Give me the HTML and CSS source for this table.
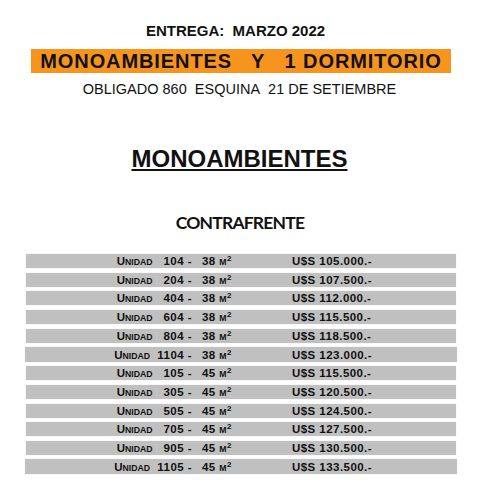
FILE: index.html
```html
<!DOCTYPE html>
<html lang="es">
<head>
<meta charset="utf-8">
<title>Entrega Marzo 2022</title>
<link rel="stylesheet" href="styles.css">
</head>
<body>
<div class="page">
  <div class="entrega">ENTREGA:&nbsp; MARZO 2022</div>
  <div class="banner">MONOAMBIENTES&nbsp;&nbsp; Y&nbsp;&nbsp; 1 DORMITORIO</div>
  <div class="address">OBLIGADO 860&nbsp; ESQUINA&nbsp; 21 DE SETIEMBRE</div>
  <h1 class="title">MONOAMBIENTES</h1>
  <h2 class="subtitle">CONTRAFRENTE</h2>
  <div class="rows">
    <div class="row"><span class="unit"><span class="lbl">U<span class="sm">nidad</span></span>&nbsp;&nbsp;&nbsp;104 -</span><span class="area">38 <span class="sm">m</span><sup>2</sup></span><span class="price">U$S 105.000.-</span></div>
    <div class="row"><span class="unit"><span class="lbl">U<span class="sm">nidad</span></span>&nbsp;&nbsp;&nbsp;204 -</span><span class="area">38 <span class="sm">m</span><sup>2</sup></span><span class="price">U$S 107.500.-</span></div>
    <div class="row"><span class="unit"><span class="lbl">U<span class="sm">nidad</span></span>&nbsp;&nbsp;&nbsp;404 -</span><span class="area">38 <span class="sm">m</span><sup>2</sup></span><span class="price">U$S 112.000.-</span></div>
    <div class="row"><span class="unit"><span class="lbl">U<span class="sm">nidad</span></span>&nbsp;&nbsp;&nbsp;604 -</span><span class="area">38 <span class="sm">m</span><sup>2</sup></span><span class="price">U$S 115.500.-</span></div>
    <div class="row"><span class="unit"><span class="lbl">U<span class="sm">nidad</span></span>&nbsp;&nbsp;&nbsp;804 -</span><span class="area">38 <span class="sm">m</span><sup>2</sup></span><span class="price">U$S 118.500.-</span></div>
    <div class="row wide"><span class="unit"><span class="lbl">U<span class="sm">nidad</span></span>&nbsp; 1104 -</span><span class="area">38 <span class="sm">m</span><sup>2</sup></span><span class="price">U$S 123.000.-</span></div>
    <div class="row"><span class="unit"><span class="lbl">U<span class="sm">nidad</span></span>&nbsp;&nbsp;&nbsp;105 -</span><span class="area">45 <span class="sm">m</span><sup>2</sup></span><span class="price">U$S 115.500.-</span></div>
    <div class="row"><span class="unit"><span class="lbl">U<span class="sm">nidad</span></span>&nbsp;&nbsp;&nbsp;305 -</span><span class="area">45 <span class="sm">m</span><sup>2</sup></span><span class="price">U$S 120.500.-</span></div>
    <div class="row"><span class="unit"><span class="lbl">U<span class="sm">nidad</span></span>&nbsp;&nbsp;&nbsp;505 -</span><span class="area">45 <span class="sm">m</span><sup>2</sup></span><span class="price">U$S 124.500.-</span></div>
    <div class="row"><span class="unit"><span class="lbl">U<span class="sm">nidad</span></span>&nbsp;&nbsp;&nbsp;705 -</span><span class="area">45 <span class="sm">m</span><sup>2</sup></span><span class="price">U$S 127.500.-</span></div>
    <div class="row"><span class="unit"><span class="lbl">U<span class="sm">nidad</span></span>&nbsp;&nbsp;&nbsp;905 -</span><span class="area">45 <span class="sm">m</span><sup>2</sup></span><span class="price">U$S 130.500.-</span></div>
    <div class="row wide"><span class="unit"><span class="lbl">U<span class="sm">nidad</span></span>&nbsp; 1105 -</span><span class="area">45 <span class="sm">m</span><sup>2</sup></span><span class="price">U$S 133.500.-</span></div>
  </div>
</div>
</body>
</html>
```
FILE: styles.css
```css
html, body {
  margin: 0;
  padding: 0;
  background: #ffffff;
}
.page {
  width: 479px;
  height: 500px;
  padding-top: 22px;
  box-sizing: border-box;
  font-family: "Liberation Sans", Arial, sans-serif;
  color: #111;
  display: flex;
  flex-direction: column;
  align-items: center;
}
.entrega {
  font-size: 15px;
  font-weight: bold;
  line-height: 17px;
  padding-right: 8px;
}
.banner {
  margin-top: 10px;
  width: 420px;
  margin-left: 3px;
  height: 24px;
  line-height: 25px;
  background: #f7941d;
  font-size: 20px;
  font-weight: bold;
  letter-spacing: 0.9px;
  text-align: center;
  white-space: nowrap;
}
.address {
  margin-top: 8px;
  font-size: 14.5px;
  line-height: 17px;
  white-space: nowrap;
}
.title {
  margin: 47px 0 0;
  font-size: 24px;
  line-height: 28px;
  font-weight: bold;
  text-decoration: underline;
  text-decoration-thickness: 2px;
  text-underline-offset: 2px;
}
.subtitle {
  margin: 40px 0 0 1px;
  font-family: Lato, "Open Sans", sans-serif;
  font-size: 17.5px;
  line-height: 20px;
  font-weight: bold;
  letter-spacing: -0.8px;
}
.rows {
  margin-top: 21px;
  margin-left: 3px;
  width: 430px;
  display: flex;
  flex-direction: column;
  gap: 4.73px;
}
.row {
  height: 14px;
  background: #c0c0c0;
  display: flex;
  align-items: center;
  font-size: 11.5px;
  font-weight: bold;
  letter-spacing: 0.45px;
  white-space: nowrap;
  box-shadow: 0 0 1px rgba(0,0,0,0.15);
}
.row.wide {
  margin: -0.5px -1px;
  height: 15px;
}
.unit {
  width: 166px;
  text-align: right;
}
.wide .unit { width: 167px; }
.lbl {
  letter-spacing: 0;
}
.area {
  margin-left: 10px;
  width: 90px;
}
.sm {
  font-size: 8.7px;
  text-transform: uppercase;
}
sup {
  font-size: 8px;
  line-height: 0;
  vertical-align: 4px;
}
```
